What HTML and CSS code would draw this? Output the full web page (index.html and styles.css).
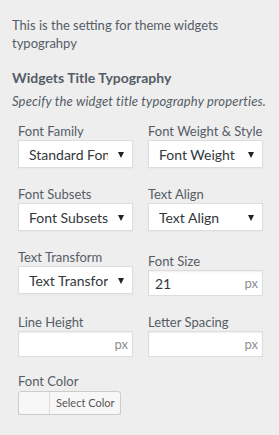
FILE: index.html
```html
<!DOCTYPE html>
<html lang="en">
<head>
    <meta name="viewport" content="width=device-width">
    <title>Widgets Typography</title>
    <link rel="stylesheet" href="styles.css">
</head>

<body>
    <div class="section">
        <p class="intro">This is the setting for theme widgets typograhpy</p>

        <h3 class="control-title">Widgets Title Typography</h3>
        <p class="control-desc">Specify the widget title typography properties.</p>

        <div class="fields">
            <div class="field">
                <label for="font-family">Font Family</label>
                <div class="select-wrap">
                    <select id="font-family"><option>Standard Fonts</option></select>
                </div>
            </div>
            <div class="field">
                <label for="font-weight">Font Weight &amp; Style</label>
                <div class="select-wrap">
                    <select id="font-weight"><option>Font Weight &amp; Style</option></select>
                </div>
            </div>

            <div class="field">
                <label for="font-subsets">Font Subsets</label>
                <div class="select-wrap">
                    <select id="font-subsets"><option>Font Subsets</option></select>
                </div>
            </div>
            <div class="field">
                <label for="text-align">Text Align</label>
                <div class="select-wrap">
                    <select id="text-align"><option>Text Align</option></select>
                </div>
            </div>

            <div class="field">
                <label for="text-transform">Text Transform</label>
                <div class="select-wrap">
                    <select id="text-transform"><option>Text Transform</option></select>
                </div>
            </div>
            <div class="field field-low">
                <label for="font-size">Font Size</label>
                <div class="unit-wrap">
                    <input type="text" id="font-size" value="21">
                    <span class="unit">px</span>
                </div>
            </div>

            <div class="field">
                <label for="line-height">Line Height</label>
                <div class="unit-wrap">
                    <input type="text" id="line-height">
                    <span class="unit">px</span>
                </div>
            </div>
            <div class="field">
                <label for="letter-spacing">Letter Spacing</label>
                <div class="unit-wrap">
                    <input type="text" id="letter-spacing">
                    <span class="unit">px</span>
                </div>
            </div>
        </div>

        <div class="field color-field">
            <label>Font Color</label>
            <button type="button" class="color-btn">
                <span class="swatch"></span>
                <span class="color-text">Select Color</span>
            </button>
        </div>
    </div>
</body>
</html>
```

FILE: styles.css
```css
html, body {
    background-color: #eeeeee;
}
body {
    margin: 0;
    padding: 0;
    font-family: Lato, "Open Sans", sans-serif;
    font-size: 13px;
    color: #555d66;
}
.section {
    padding: 16px 12px 0 12px;
}
.intro {
    margin: 0;
    line-height: 18px;
}
.control-title {
    margin: 16px 0 0 0;
    font-size: 14px;
    font-weight: 700;
    line-height: 20px;
}
.control-desc {
    margin: 4px 0 0 0;
    font-style: italic;
    letter-spacing: 0.15px;
    line-height: 18px;
}
.fields {
    margin: 12px 0 0 6px;
    display: grid;
    grid-template-columns: 130px 130px;
    row-gap: 17px;
    align-items: start;
}
.field label {
    display: block;
    line-height: 18px;
}
.field-low {
    margin-top: 4px;
}
.select-wrap,
.unit-wrap {
    position: relative;
    width: 115px;
}
select {
    -webkit-appearance: none;
    appearance: none;
    display: block;
    width: 115px;
    height: 28px;
    margin: 0;
    padding: 0 24px 0 10px;
    border: 1px solid #dddddd;
    border-radius: 0;
    background: #ffffff;
    font-family: inherit;
    font-size: 14px;
    color: #32373c;
    box-shadow: 0 1px 2px rgba(0, 0, 0, 0.04);
}
.select-wrap::after {
    content: "";
    position: absolute;
    top: 12px;
    right: 9px;
    border-left: 3px solid transparent;
    border-right: 3px solid transparent;
    border-top: 6px solid #222222;
}
input[type="text"] {
    display: block;
    width: 115px;
    height: 26px;
    margin: 0;
    padding: 0 26px 0 6px;
    box-sizing: border-box;
    border: 1px solid #dddddd;
    background: #ffffff;
    font-family: inherit;
    font-size: 14px;
    color: #32373c;
    box-shadow: inset 0 1px 2px rgba(0, 0, 0, 0.07);
}
.unit {
    position: absolute;
    top: 0;
    right: 5px;
    line-height: 26px;
    font-size: 13px;
    color: #8c8f94;
}
.color-field {
    margin: 15px 0 0 6px;
}
.color-btn {
    display: flex;
    align-items: stretch;
    height: 24px;
    margin: 1px 0 0 0;
    padding: 0;
    border: 1px solid #cccccc;
    border-radius: 3px;
    background: #f7f7f7;
    box-shadow: 0 1px 0 #cccccc;
    font-family: inherit;
    cursor: pointer;
}
.swatch {
    width: 30px;
    border-right: 1px solid #dddddd;
    border-radius: 3px 0 0 3px;
    background: #f7f7f7;
}
.color-text {
    padding: 0 6px 0 6px;
    line-height: 22px;
    font-size: 11px;
    color: #555555;
}
```
